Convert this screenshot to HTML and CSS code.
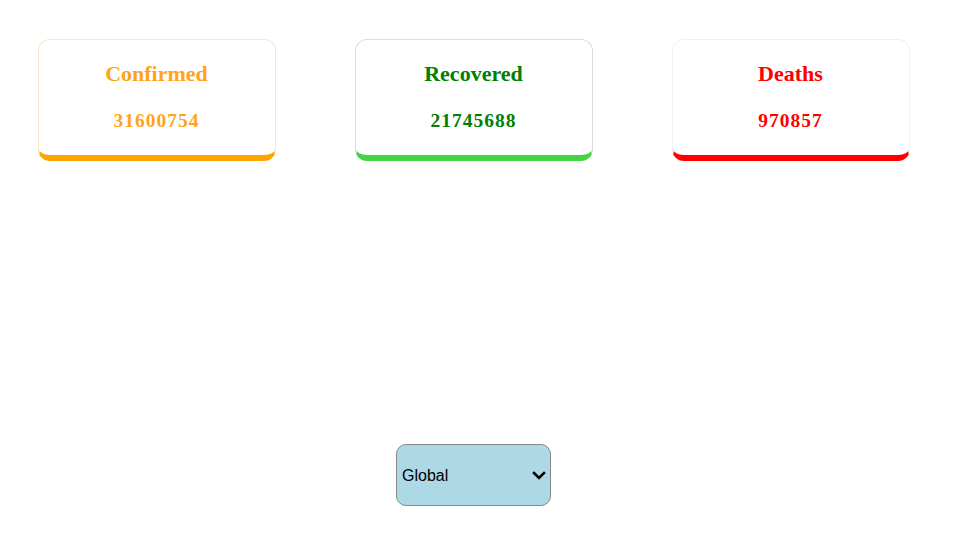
FILE: index.html
```html
<!DOCTYPE html>
<html>
<head>
<meta charset="utf-8">
<link rel="stylesheet" href="styles.css">
</head>
<body>
<div class="page">
  <div class="cards">
    <div class="card card-confirmed">
      <h2 class="card-title">Confirmed</h2>
      <p class="card-value">31600754</p>
    </div>
    <div class="card card-recovered">
      <h2 class="card-title">Recovered</h2>
      <p class="card-value">21745688</p>
    </div>
    <div class="card card-deaths">
      <h2 class="card-title">Deaths</h2>
      <p class="card-value">970857</p>
    </div>
  </div>
  <div class="picker">
    <div class="select-wrap">
      <select class="country-select">
        <option>Global</option>
      </select>
      <svg class="chevron" width="14" height="9" viewBox="0 0 14 9"><path d="M2 2 L7 7 L12 2" fill="none" stroke="#000" stroke-width="2.6" stroke-linecap="square"/></svg>
    </div>
  </div>
</div>
</body>
</html>
```
FILE: styles.css
```css
html, body {
  margin: 0;
  padding: 0;
  background: #fff;
}
.page {
  width: 947px;
  padding-top: 39px;
}
.cards {
  display: flex;
  justify-content: center;
  gap: 79px;
}
.card {
  box-sizing: border-box;
  width: 238px;
  height: 122px;
  border: 1px solid #eee;
  border-bottom-width: 6px;
  border-radius: 12px;
  text-align: center;
  font-family: "Liberation Serif", serif;
  font-weight: bold;
}
.card-title {
  margin: 21px 0 0;
  font-size: 22px;
  line-height: 26px;
}
.card-value {
  margin: 23px 0 0;
  font-size: 19.5px;
  line-height: 22px;
  letter-spacing: 1px;
}
.card-confirmed {
  color: #ffa31a;
  border-color: #fbe7c2;
  border-bottom-color: #ffa500;
}
.card-recovered {
  color: #008000;
  border-color: #dcdcdc;
  border-bottom-color: #41d641;
}
.card-deaths {
  color: #ff0000;
  border-color: #f1f1f1;
  border-bottom-color: #ff0000;
}
.picker {
  display: flex;
  justify-content: center;
  margin-top: 283px;
}
.select-wrap {
  position: relative;
}
.country-select {
  display: block;
  appearance: none;
  -webkit-appearance: none;
  width: 155px;
  height: 62px;
  background: #add8e6;
  border: 1px solid #888;
  border-radius: 10px;
  font-family: "Liberation Sans", Arial, sans-serif;
  font-size: 16px;
  color: #000;
  padding: 0 0 0 5px;
}
.chevron {
  position: absolute;
  right: 5px;
  top: 27px;
  pointer-events: none;
}
```
